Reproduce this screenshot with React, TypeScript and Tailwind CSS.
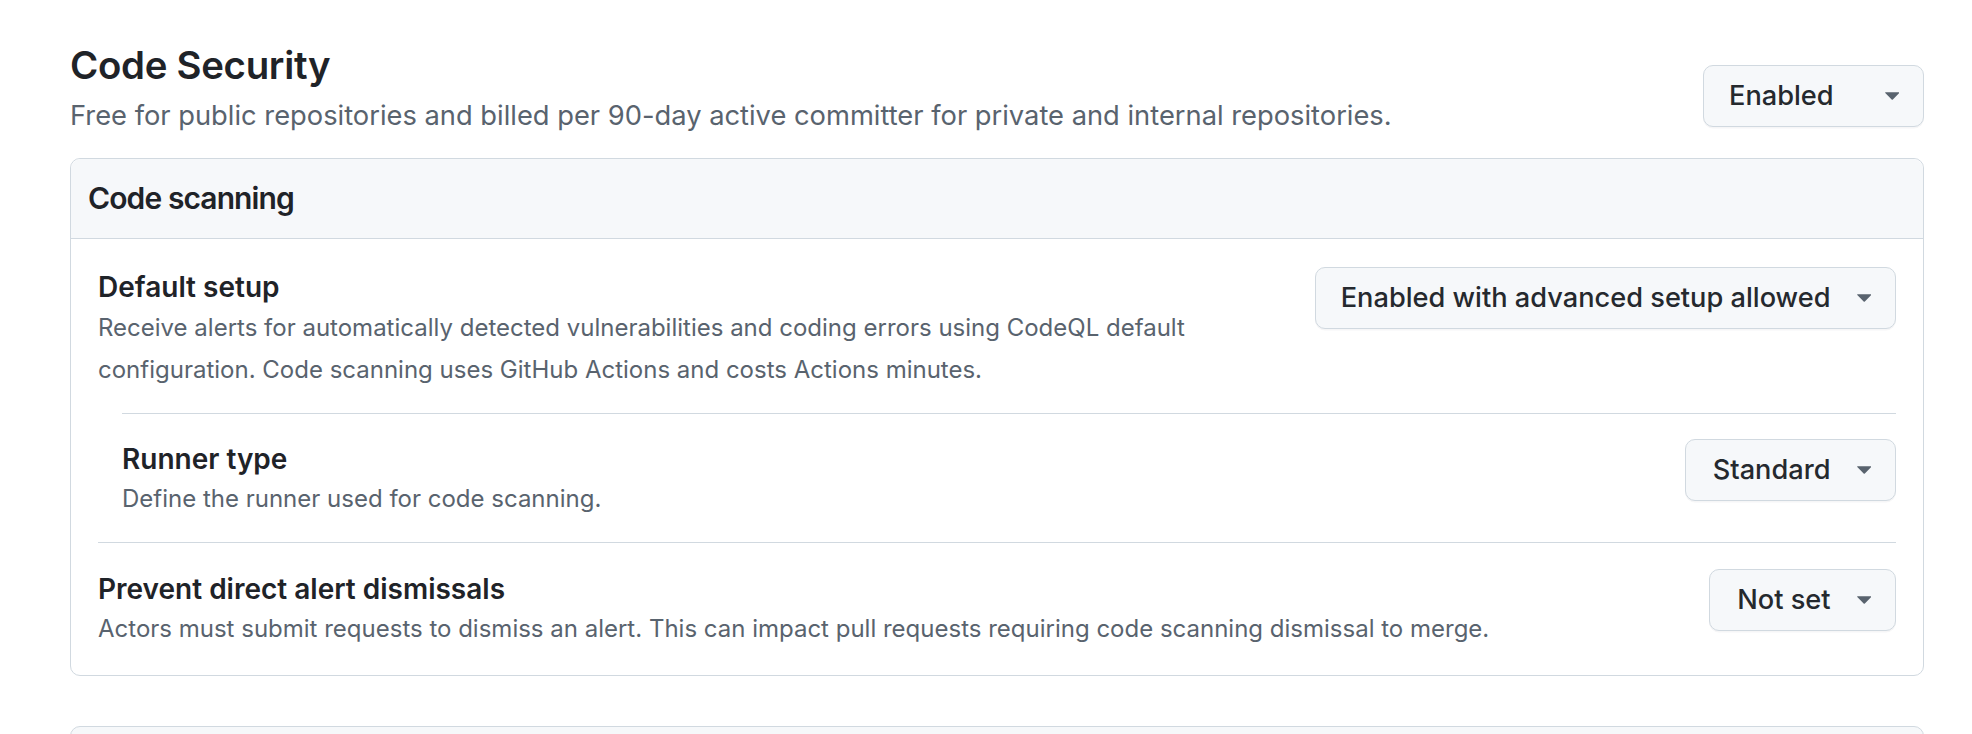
import React from "react";

function Caret() {
    return (
        <svg width="14.5" height="8" viewBox="4.3 6.9 7.4 4.1" className="shrink-0 fill-[#59636e]">
            <path d="m4.427 7.427 3.396 3.396a.25.25 0 0 0 .354 0l3.396-3.396A.25.25 0 0 0 11.396 7H4.604a.25.25 0 0 0-.177.427Z" />
        </svg>
    );
}

function Dropdown({ label, className = "" }: { label: string; className?: string }) {
    return (
        <button
            className={
                "flex h-[62px] shrink-0 items-center gap-[26px] rounded-[10px] border border-[#d1d9e0] bg-[#f6f8fa] pl-[25px] pr-[24px] text-[27.2px] font-medium text-[#25292e] shadow-[0_1.5px_0_rgba(31,35,40,0.04)] " +
                className
            }
        >
            <span>{label}</span>
            <Caret />
        </button>
    );
}

function SettingText({ title, children }: { title: string; children: React.ReactNode }) {
    return (
        <div className="min-w-0">
            <h4 className="text-[28px] font-semibold leading-[40px] text-[#1f2328]">{title}</h4>
            <p className="text-[24px] leading-[41.5px] text-[#59636e]">{children}</p>
        </div>
    );
}

export default function App() {
    return (
        <div className="min-h-screen bg-white pl-[70px] pr-[48px] pt-[41px] font-['Inter',sans-serif]">
            {/* Subhead */}
            <div className="flex items-start justify-between">
                <div>
                    <h2 className="text-[38.4px] font-semibold leading-[48px] tracking-[-0.3px] text-[#1f2328]">Code Security</h2>
                    <p className="mt-[8px] text-[27.3px] leading-[38px] text-[#59636e]">
                        Free for public repositories and billed per 90-day active committer for private and internal repositories.
                    </p>
                </div>
                <Dropdown label="Enabled" className="mt-[24px] w-[221px] justify-between" />
            </div>

            {/* Code scanning box */}
            <div className="mt-[23px] rounded-[10px] border border-[#d1d9e0]">
                <div className="flex h-[80px] items-center rounded-t-[10px] border-b border-[#d1d9e0] bg-[#f6f8fa] px-[17px]">
                    <h3 className="text-[30px] font-semibold tracking-[-0.9px] text-[#1f2328]">Code scanning</h3>
                </div>
                <div className="px-[27px]">
                    {/* Default setup */}
                    <div className="flex items-start justify-between gap-8 pb-[23px] pt-[28px]">
                        <div className="max-w-[1100px]">
                            <SettingText title="Default setup">
                                Receive alerts for automatically detected vulnerabilities and coding errors using CodeQL default
                                configuration. Code scanning uses GitHub Actions and costs Actions minutes.
                            </SettingText>
                        </div>
                        <Dropdown label="Enabled with advanced setup allowed" />
                    </div>

                    {/* Runner type */}
                    <div className="ml-[24px] flex items-start justify-between border-t border-[#d1d9e0] pb-[23px] pt-[25px]">
                        <div>
                            <h4 className="text-[28px] font-semibold leading-[40px] text-[#1f2328]">Runner type</h4>
                            <p className="text-[24px] leading-[40px] text-[#59636e]">Define the runner used for code scanning.</p>
                        </div>
                        <Dropdown label="Standard" className="pl-[27px]" />
                    </div>

                    {/* Prevent direct alert dismissals */}
                    <div className="flex items-start justify-between border-t border-[#d1d9e0] pb-[26px] pt-[26px]">
                        <div>
                            <h4 className="text-[28px] font-semibold leading-[40px] text-[#1f2328]">Prevent direct alert dismissals</h4>
                            <p className="text-[24px] leading-[40px] text-[#59636e]">
                                Actors must submit requests to dismiss an alert. This can impact pull requests requiring code scanning dismissal to merge.
                            </p>
                        </div>
                        <Dropdown label="Not set" className="pl-[27px]" />
                    </div>
                </div>
            </div>

            {/* Next box (cut off) */}
            <div className="mt-[50px] h-[120px] rounded-t-[10px] border border-[#d1d9e0] bg-[#f6f8fa]" />
        </div>
    );
}
